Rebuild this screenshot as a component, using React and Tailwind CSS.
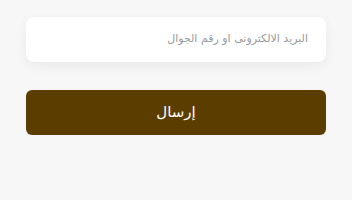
export default function App() {
  return (
    <div dir="rtl" className="min-h-[200px] w-full bg-[#f7f7f7] px-[26px] pt-[17px]" style={{ fontFamily: '"DejaVu Sans", "Noto Sans", sans-serif' }}>
      <div className="flex h-[45px] items-center rounded-[8px] bg-white pr-[18px] shadow-[0_4px_12px_rgba(0,0,0,0.06)]">
        <span className="text-[11px] text-[#9a9a9a]">البريد الالكترونى او رقم الجوال</span>
      </div>
      <button className="mt-[28px] flex h-[45px] w-full items-center justify-center rounded-[6px] bg-[#5c3d00] text-[15px] text-white">
        إرسال
      </button>
    </div>
  );
}
